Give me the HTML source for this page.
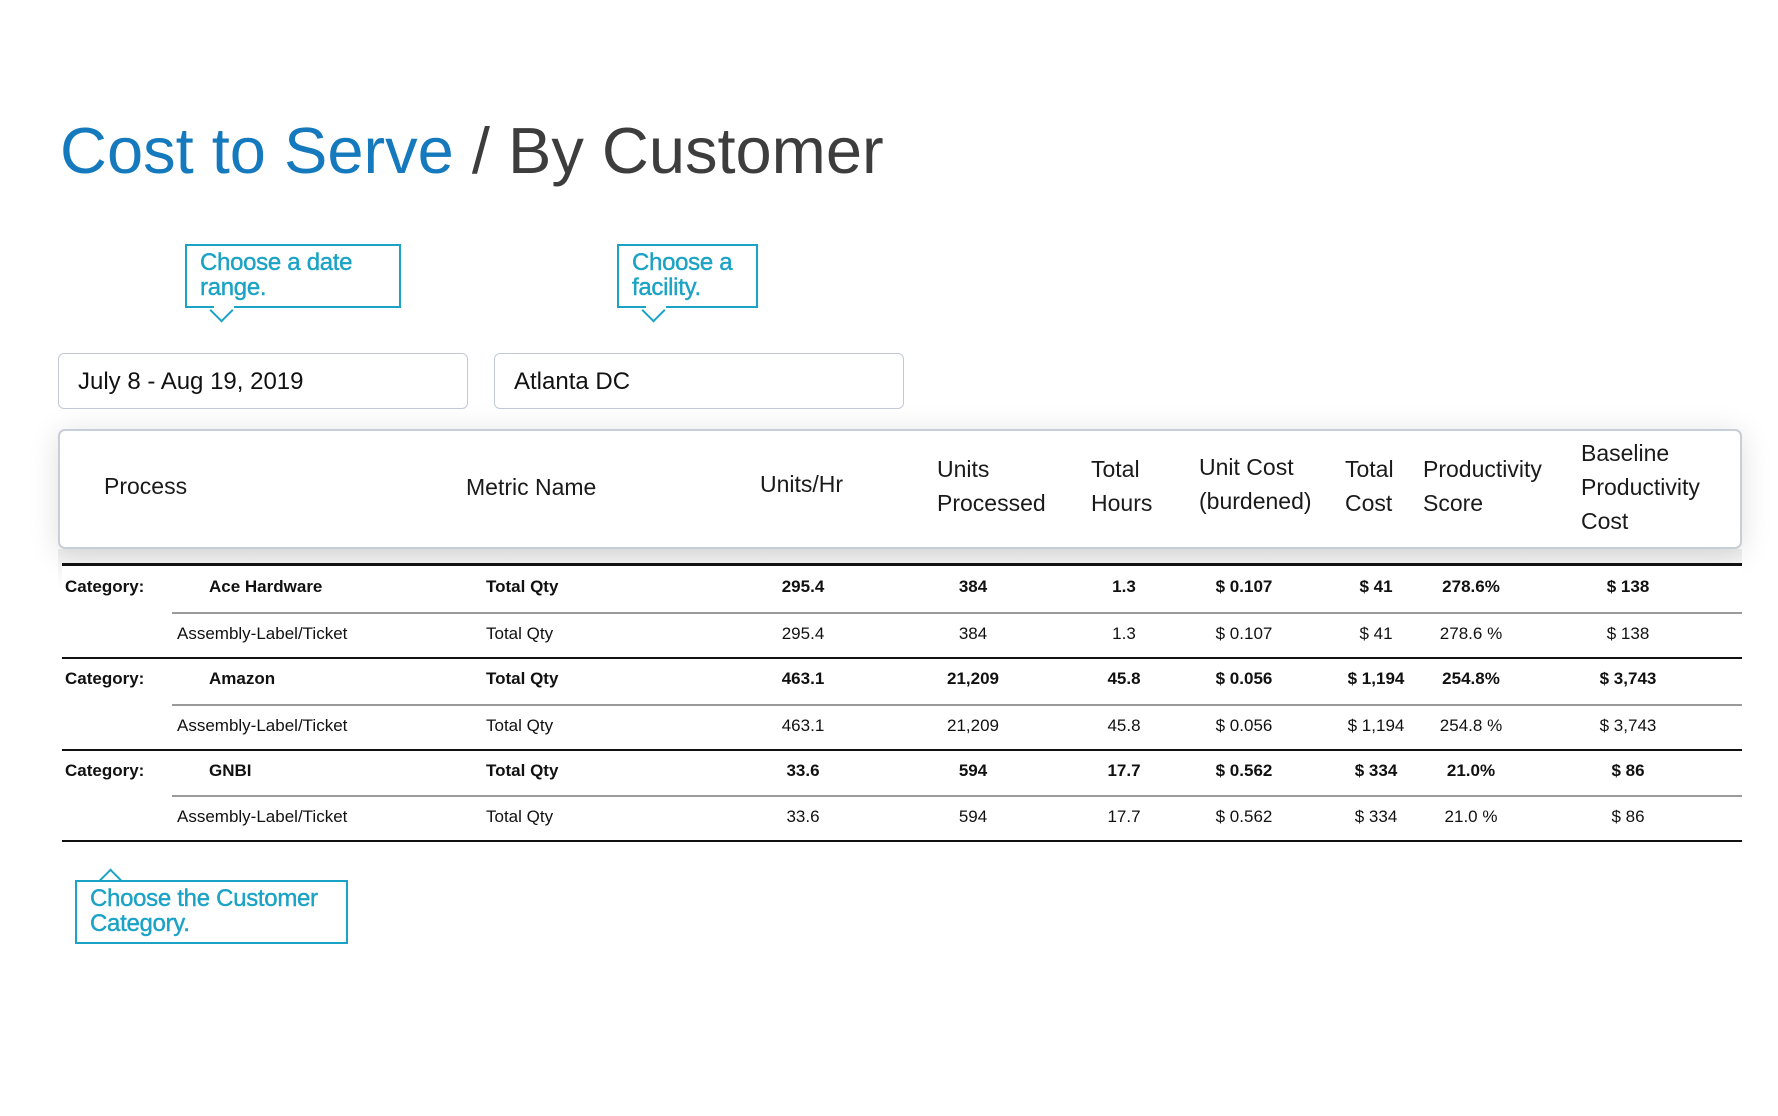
<!DOCTYPE html>
<html><head><meta charset="utf-8"><style>
*{margin:0;padding:0;box-sizing:border-box}
body{width:1778px;height:1116px;background:#fff;position:relative;overflow:hidden;font-family:"Liberation Sans",Arial,sans-serif}
.a{position:absolute;white-space:nowrap}
.title{left:60px;top:112px;font-size:65px;color:#3d3d3d;line-height:78px}
.title .b{color:#1479bd}
.tip{position:absolute;border:2px solid #1ba3c6;background:#fff;color:#1ba3c6;font-size:24px;line-height:25px;padding:4px 13px;font-family:"Liberation Sans",sans-serif;letter-spacing:-0.3px;-webkit-text-stroke:0.4px #1ba3c6}
.arr{position:absolute;width:17px;height:17px;background:#fff;border-right:2px solid #1ba3c6;border-bottom:2px solid #1ba3c6;transform:rotate(45deg)}
.arru{position:absolute;width:17px;height:17px;background:#fff;border-left:2px solid #1ba3c6;border-top:2px solid #1ba3c6;transform:rotate(45deg)}
.inp{position:absolute;border:1px solid #c3cad6;border-radius:6px;background:#fff;font-size:24px;color:#111;padding-left:19px;line-height:55px}
.card{position:absolute;left:58px;top:429px;width:1684px;height:120px;border:2px solid #c8ced8;border-radius:7px;background:#fff;box-shadow:0 4px 30px rgba(0,0,0,0.13)}
.h{position:absolute;font-size:23px;line-height:34px;color:#1a1a1a}
.ln{position:absolute;height:2px;background:#111}
.lg{position:absolute;height:2px;background:#9a9a9a;left:172px;width:1570px}
.c{position:absolute;font-size:17px;color:#111;white-space:nowrap}
.bd{font-weight:bold}
.ct{transform:translateX(-50%)}
</style></head><body>
<div class="a title"><span class="b">Cost to Serve</span> / By Customer</div>

<div class="arr" style="left:213px;top:302px"></div>
<div class="tip" style="left:185px;top:244px;width:216px;height:64px">Choose a date<br>range.</div>
<div class="arr" style="left:645px;top:302px"></div>
<div class="tip" style="left:617px;top:244px;width:141px;height:64px">Choose a<br>facility.</div>
<div class="arru" style="left:102px;top:872px"></div>
<div class="tip" style="left:75px;top:880px;width:273px;height:64px">Choose the Customer<br>Category.</div>
<div style="position:absolute;left:214px;top:303px;width:20px;height:5px;background:#fff"></div>
<div style="position:absolute;left:646px;top:303px;width:20px;height:5px;background:#fff"></div>
<div style="position:absolute;left:100px;top:882px;width:22px;height:5px;background:#fff"></div>

<div class="inp" style="left:58px;top:353px;width:410px;height:56px">July 8 - Aug 19, 2019</div>
<div class="inp" style="left:494px;top:353px;width:410px;height:56px">Atlanta DC</div>

<div style="position:absolute;left:58px;top:549px;width:1684px;height:40px;background:linear-gradient(#eeeeee,#fff)"></div>
<div class="card"></div>
<div class="h" style="left:104px;top:469px">Process</div>
<div class="h" style="left:466px;top:470px">Metric Name</div>
<div class="h" style="left:760px;top:467px">Units/Hr</div>
<div class="h" style="left:937px;top:452px">Units<br>Processed</div>
<div class="h" style="left:1091px;top:452px">Total<br>Hours</div>
<div class="h" style="left:1199px;top:450px">Unit Cost<br>(burdened)</div>
<div class="h" style="left:1345px;top:452px">Total<br>Cost</div>
<div class="h" style="left:1423px;top:452px">Productivity<br>Score</div>
<div class="h" style="left:1581px;top:436px">Baseline<br>Productivity<br>Cost</div>

<div style="position:absolute;left:62px;top:564px;width:1680px;height:280px;background:#fff"></div>
<div class="ln" style="left:62px;width:1680px;top:563px;height:3px"></div>
<div class="lg" style="top:612px"></div>
<div class="ln" style="left:62px;width:1680px;top:657px"></div>
<div class="lg" style="top:704px"></div>
<div class="ln" style="left:62px;width:1680px;top:749px"></div>
<div class="lg" style="top:795px"></div>
<div class="ln" style="left:62px;width:1680px;top:840px"></div>

<div class="c bd" style="left:65px;top:577px">Category:</div>
<div class="c bd" style="left:209px;top:577px">Ace Hardware</div>
<div class="c bd" style="left:486px;top:577px">Total Qty</div>
<div class="c bd ct" style="left:803px;top:577px">295.4</div>
<div class="c bd ct" style="left:973px;top:577px">384</div>
<div class="c bd ct" style="left:1124px;top:577px">1.3</div>
<div class="c bd ct" style="left:1244px;top:577px">$ 0.107</div>
<div class="c bd ct" style="left:1376px;top:577px">$ 41</div>
<div class="c bd ct" style="left:1471px;top:577px">278.6%</div>
<div class="c bd ct" style="left:1628px;top:577px">$ 138</div>

<div class="c" style="left:177px;top:624px">Assembly-Label/Ticket</div>
<div class="c" style="left:486px;top:624px">Total Qty</div>
<div class="c ct" style="left:803px;top:624px">295.4</div>
<div class="c ct" style="left:973px;top:624px">384</div>
<div class="c ct" style="left:1124px;top:624px">1.3</div>
<div class="c ct" style="left:1244px;top:624px">$ 0.107</div>
<div class="c ct" style="left:1376px;top:624px">$ 41</div>
<div class="c ct" style="left:1471px;top:624px">278.6 %</div>
<div class="c ct" style="left:1628px;top:624px">$ 138</div>

<div class="c bd" style="left:65px;top:669px">Category:</div>
<div class="c bd" style="left:209px;top:669px">Amazon</div>
<div class="c bd" style="left:486px;top:669px">Total Qty</div>
<div class="c bd ct" style="left:803px;top:669px">463.1</div>
<div class="c bd ct" style="left:973px;top:669px">21,209</div>
<div class="c bd ct" style="left:1124px;top:669px">45.8</div>
<div class="c bd ct" style="left:1244px;top:669px">$ 0.056</div>
<div class="c bd ct" style="left:1376px;top:669px">$ 1,194</div>
<div class="c bd ct" style="left:1471px;top:669px">254.8%</div>
<div class="c bd ct" style="left:1628px;top:669px">$ 3,743</div>

<div class="c" style="left:177px;top:716px">Assembly-Label/Ticket</div>
<div class="c" style="left:486px;top:716px">Total Qty</div>
<div class="c ct" style="left:803px;top:716px">463.1</div>
<div class="c ct" style="left:973px;top:716px">21,209</div>
<div class="c ct" style="left:1124px;top:716px">45.8</div>
<div class="c ct" style="left:1244px;top:716px">$ 0.056</div>
<div class="c ct" style="left:1376px;top:716px">$ 1,194</div>
<div class="c ct" style="left:1471px;top:716px">254.8 %</div>
<div class="c ct" style="left:1628px;top:716px">$ 3,743</div>

<div class="c bd" style="left:65px;top:761px">Category:</div>
<div class="c bd" style="left:209px;top:761px">GNBI</div>
<div class="c bd" style="left:486px;top:761px">Total Qty</div>
<div class="c bd ct" style="left:803px;top:761px">33.6</div>
<div class="c bd ct" style="left:973px;top:761px">594</div>
<div class="c bd ct" style="left:1124px;top:761px">17.7</div>
<div class="c bd ct" style="left:1244px;top:761px">$ 0.562</div>
<div class="c bd ct" style="left:1376px;top:761px">$ 334</div>
<div class="c bd ct" style="left:1471px;top:761px">21.0%</div>
<div class="c bd ct" style="left:1628px;top:761px">$ 86</div>

<div class="c" style="left:177px;top:807px">Assembly-Label/Ticket</div>
<div class="c" style="left:486px;top:807px">Total Qty</div>
<div class="c ct" style="left:803px;top:807px">33.6</div>
<div class="c ct" style="left:973px;top:807px">594</div>
<div class="c ct" style="left:1124px;top:807px">17.7</div>
<div class="c ct" style="left:1244px;top:807px">$ 0.562</div>
<div class="c ct" style="left:1376px;top:807px">$ 334</div>
<div class="c ct" style="left:1471px;top:807px">21.0 %</div>
<div class="c ct" style="left:1628px;top:807px">$ 86</div>
</body></html>
